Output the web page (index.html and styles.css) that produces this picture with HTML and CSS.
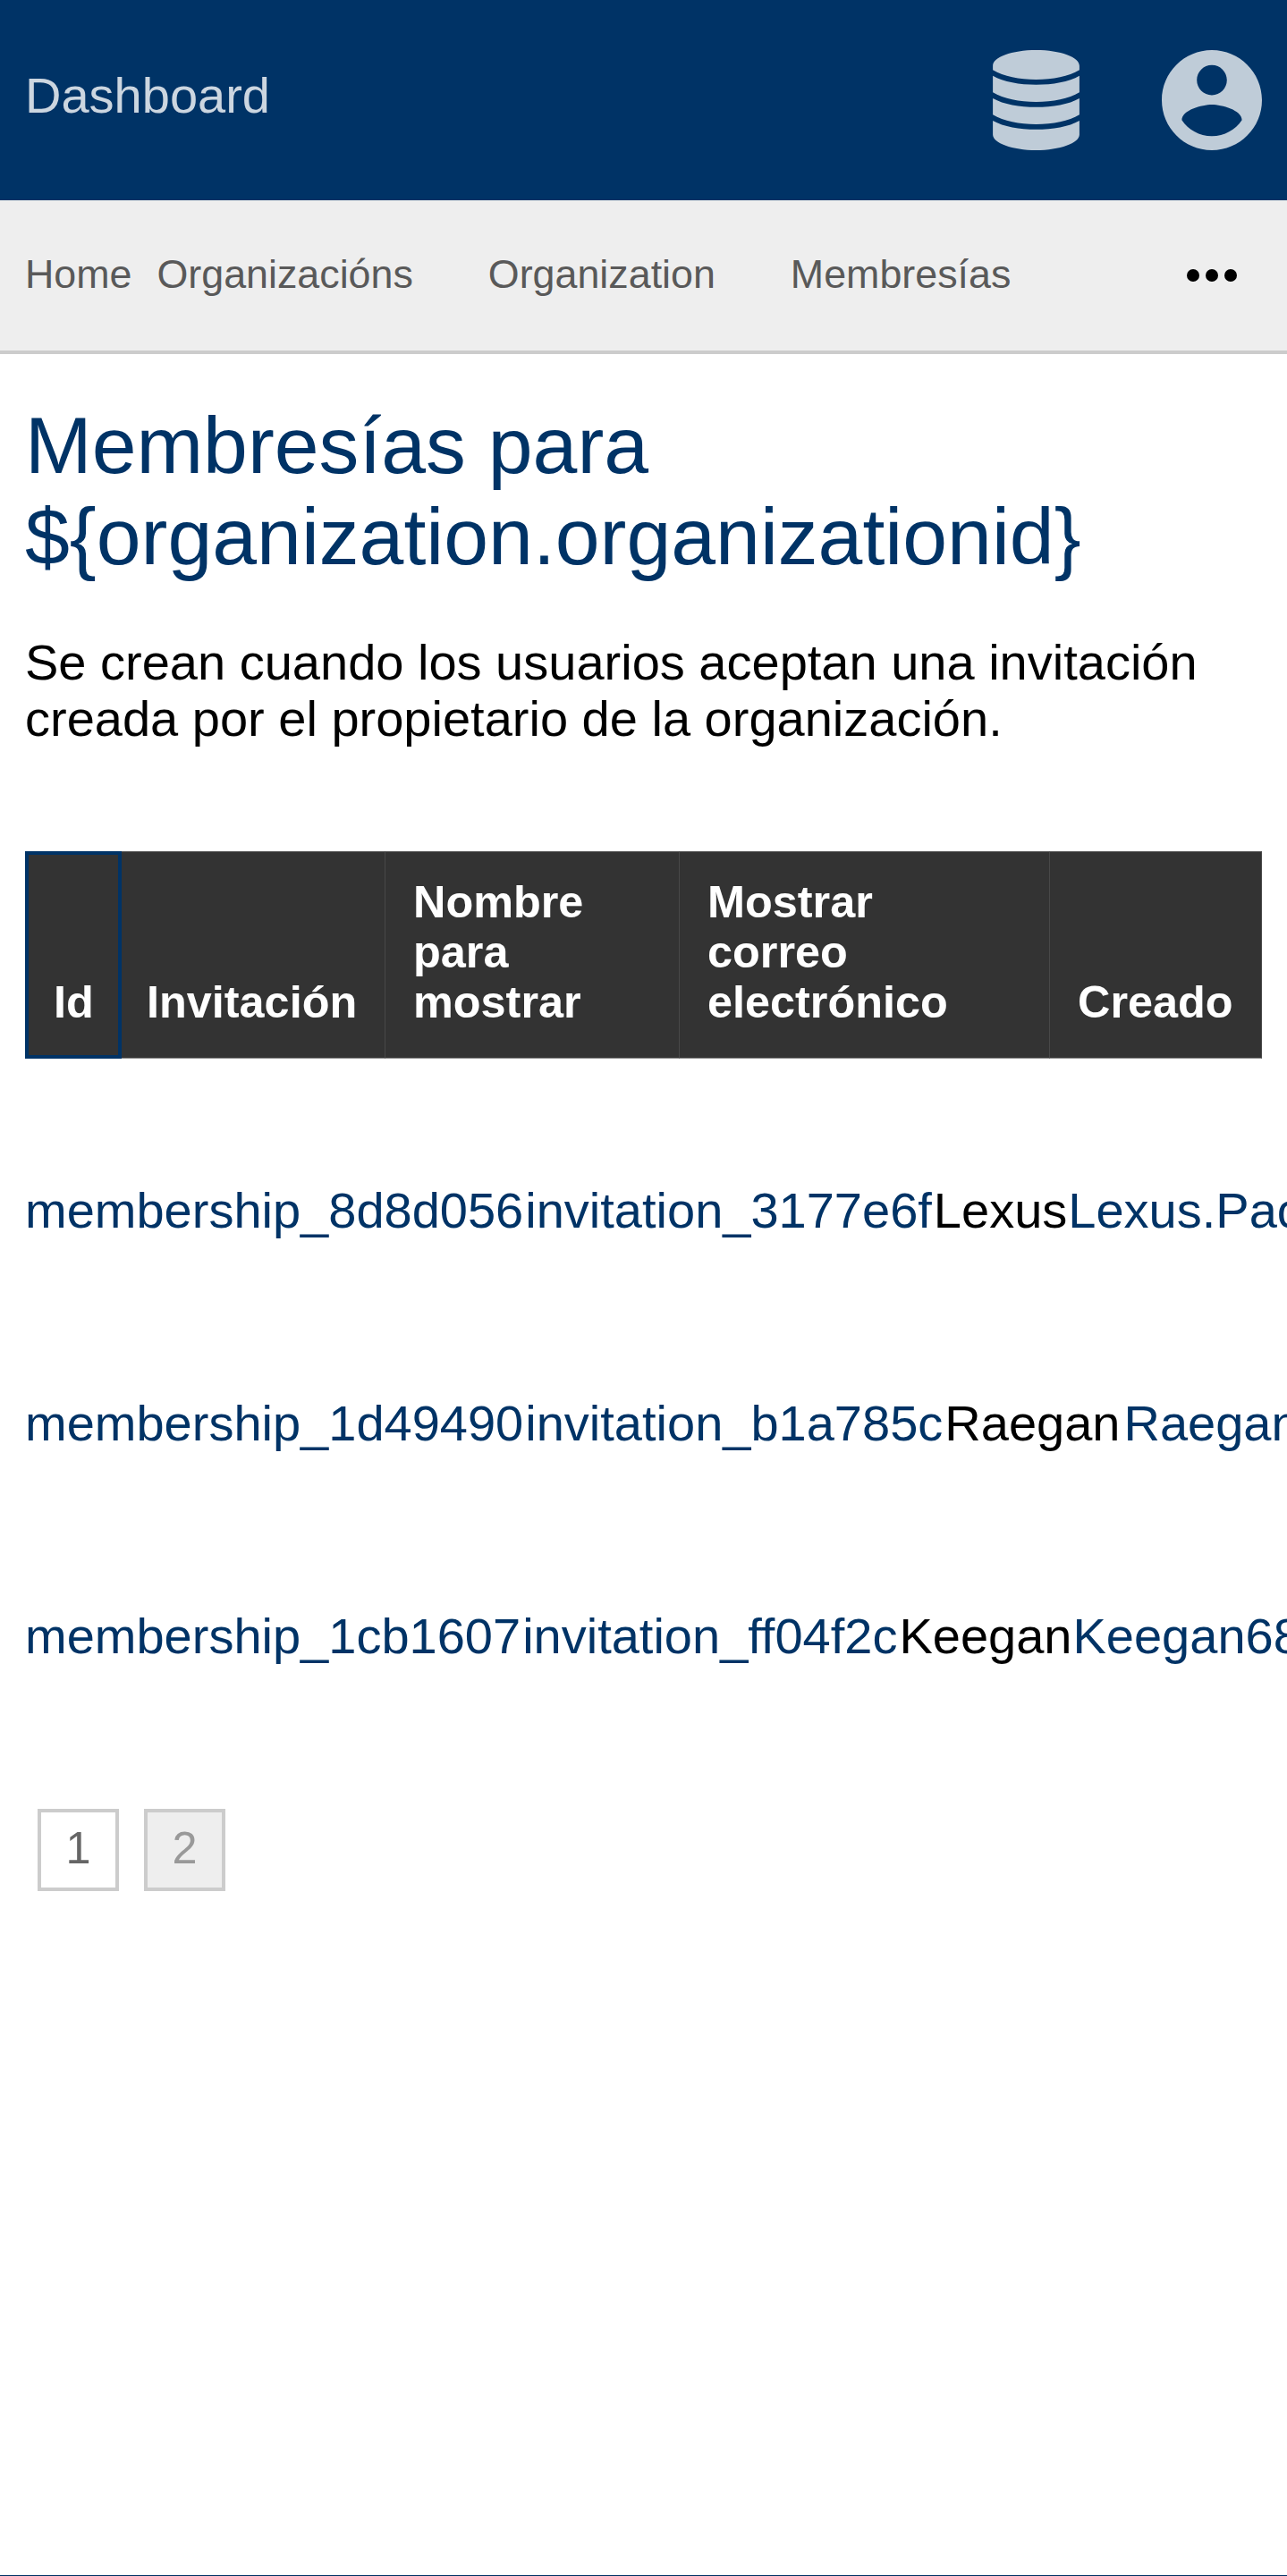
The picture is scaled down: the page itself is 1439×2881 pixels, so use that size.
FILE: index.html
```html
<!DOCTYPE html>
<html lang="es">
<head>
<meta charset="utf-8">
<title>Dashboard</title>
<link rel="stylesheet" href="styles.css">
</head>
<body>
<header class="header">
  <a class="brand">Dashboard</a>
  <div class="menus">
    <svg class="icon-db" viewBox="0 0 96.8 112"><path d="M0 17.5C0 8 21 0 48.4 0S96.8 8 96.8 17.5V22.3C85 29.5 67 33 48.4 33S12 29.5 0 22.3zM0 28.7C12 35.5 30 38.7 48.4 38.7S85 35.5 96.8 28.7V47.3C85 54.5 67 58 48.4 58S12 54.5 0 47.3zM0 54C12 60.8 30 63.8 48.4 63.8S85 60.8 96.8 54V72.3C85 79.5 67 83 48.4 83S12 79.5 0 72.3zM0 79C12 85.8 30 88.8 48.4 88.8S85 85.8 96.8 79V94.5C96.8 104 75 112 48.4 112S0 104 0 94.5z"/></svg>
    <svg class="icon-user" viewBox="2 2 20 20"><path d="M12 2C6.48 2 2 6.48 2 12s4.48 10 10 10 10-4.48 10-10S17.52 2 12 2zm0 3c1.66 0 3 1.34 3 3s-1.34 3-3 3-3-1.34-3-3 1.34-3 3-3zm0 14.2c-2.5 0-4.71-1.28-6-3.22.03-1.99 4-3.08 6-3.08 1.99 0 5.97 1.09 6 3.08-1.29 1.94-3.5 3.22-6 3.22z"/></svg>
  </div>
</header>
<nav class="nav">
  <a class="home">Home</a>
  <a>Organizacións</a>
  <a>Organization</a>
  <a>Membresías</a>
  <svg class="icon-more" viewBox="0 0 24 24"><circle cx="6" cy="12" r="2"/><circle cx="12" cy="12" r="2"/><circle cx="18" cy="12" r="2"/></svg>
</nav>
<main class="content">
  <h1>Membresías para ${organization.organizationid}</h1>
  <p class="intro">Se crean cuando los usuarios aceptan una invitación creada por el propietario de la organización.</p>
  <table class="list">
    <colgroup><col class="c-id"><col class="c-inv"><col class="c-name"><col class="c-mail"><col class="c-date"></colgroup>
    <thead><tr><th class="sorted">Id</th><th class="first">Invitación</th><th>Nombre<br>para<br>mostrar</th><th>Mostrar<br>correo<br>electrónico</th><th>Creado</th></tr></thead>
  </table>
  <div class="rows">
    <div class="row"><a>membership_8d8d056</a><a>invitation_3177e6f</a><span>Lexus</span><a>Lexus.Pac</a></div>
    <div class="row"><a>membership_1d49490</a><a>invitation_b1a785c</a><span class="wide">Raegan</span><a>Raegan</a></div>
    <div class="row"><a>membership_1cb1607</a><a>invitation_ff04f2c</a><span>Keegan</span><a>Keegan68</a></div>
  </div>
  <div class="pages"><a class="page">1</a><a class="page current">2</a></div>
</main>
<footer class="footer"></footer>
</body>
</html>
```
FILE: styles.css
```css
* { box-sizing: border-box; }
body {
  margin: 0;
  height: 2881px;
  display: flex;
  flex-direction: column;
  overflow: hidden;
  background: #fff;
  color: #000;
  font: 56px/63px "Liberation Sans", Arial, sans-serif;
}
.header {
  display: flex;
  flex: none;
  justify-content: space-between;
  height: 224px;
  padding: 56px 28px;
  background: #036;
}
.brand { line-height: 102px; color: #ccd6e0; }
.menus { display: flex; gap: 92px; fill: #bfccd8; }
.icon-db { width: 97px; height: 112px; }
.icon-user { width: 112px; height: 112px; }
.nav {
  display: flex;
  flex: none;
  align-items: center;
  gap: 84px;
  height: 172px;
  padding: 0 42px 0 28px;
  border-bottom: 4px solid #ccc;
  background: #eee;
  color: #595959;
  font-size: 44.8px;
}
.nav a { padding-bottom: 3px; }
.home { margin-right: -56px; }
.icon-more { width: 84px; height: 84px; margin-left: auto; }
.content { flex: 1; min-height: 0; padding: 51px 28px 0; }
h1 { margin: 0; color: #036; font-size: 89.6px; font-weight: 400; line-height: 102px; }
.intro { margin: 58px 0 0; }
.list {
  width: 1383px;
  margin-top: 117px;
  table-layout: fixed;
  border-collapse: separate;
  border-spacing: 0;
  background: #333;
  color: #fff;
  font-size: 50.4px;
  line-height: 56px;
}
.c-id { width: 108px; }
.c-inv { width: 295px; }
.c-name { width: 329px; }
.c-mail { width: 414px; }
.c-date { width: 237px; }
.list th {
  height: 232px;
  padding: 28px 0 34px 31px;
  border: solid #555;
  border-width: 1px 1px 1px 0;
  border-bottom-color: #888;
  border-right-color: #484848;
  vertical-align: bottom;
  text-align: left;
  white-space: nowrap;
}
.list .first { padding-left: 28px; }
.list .sorted { border: 4px solid #036; padding: 28px 0 31px 28px; }
.rows { margin-right: -28px; padding-top: 50px; overflow: hidden; }
.row { display: flex; align-items: center; gap: 2px; height: 238px; white-space: nowrap; }
.row a { color: #036; }
.row span { margin-right: -1px; }
.row .wide { margin-right: 2px; }
.pages { display: flex; gap: 28px; padding: 75px 14px 0; }
.page {
  width: 91px;
  height: 92px;
  border: 4px solid #ccc;
  color: #666;
  font-size: 50.4px;
  line-height: 79px;
  text-align: center;
}
.current { background: #eee; color: #999; }
.footer { flex: none; height: 1px; background: #036; }
```
